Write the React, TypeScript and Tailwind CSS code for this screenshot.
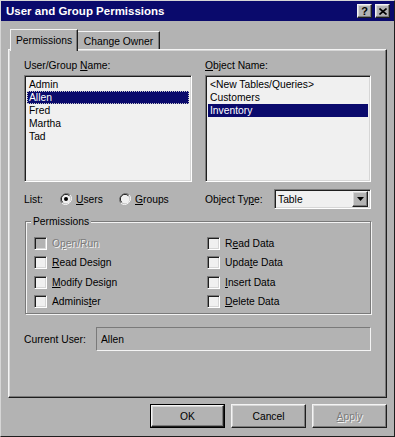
import type { ReactNode } from "react";

const U = ({ children }: { children: ReactNode }) => (
  <span className="underline underline-offset-[1px]">{children}</span>
);

const sunken =
  "border border-t-[#7a7a7a] border-l-[#7a7a7a] border-r-white border-b-white shadow-[inset_1px_1px_0_#1e1e1e,inset_-1px_-1px_0_#d6d6d6]";

const raised =
  "border border-t-[#f4f4f4] border-l-[#f4f4f4] border-r-[#1e1e1e] border-b-[#1e1e1e] shadow-[inset_-1px_-1px_0_#7a7a7a,inset_1px_1px_0_#d6d6d6]";

const disabledText = "text-[#7c7c7c] [text-shadow:1px_1px_0_#f4f4f4]";

const Checkbox = ({ label, disabled }: { label: ReactNode; disabled?: boolean }) => (
  <div className="flex items-center h-[13px]">
    <div className={`w-[13px] h-[13px] ${sunken} ${disabled ? "bg-[#b3b3b3]" : "bg-[#f0f0f0]"}`} />
    <span className={`ml-[5px] ${disabled ? disabledText : ""}`}>{label}</span>
  </div>
);

const Radio = ({ checked }: { checked?: boolean }) => (
  <svg width="12" height="12" viewBox="0 0 12 12">
    <path d="M10.2 1.8A6 6 0 0 0 1.8 10.2" fill="none" stroke="#7a7a7a" strokeWidth="1" />
    <path d="M1.8 10.2A6 6 0 0 0 10.2 1.8" fill="none" stroke="#f4f4f4" strokeWidth="1" />
    <circle cx="6" cy="6" r="4.6" fill="#f0f0f0" />
    <path d="M9.3 2.7A4.6 4.6 0 0 0 2.7 9.3" fill="none" stroke="#1e1e1e" strokeWidth="1" />
    {checked && <circle cx="6" cy="6" r="2" fill="#000" />}
  </svg>
);

const users = ["Admin", "Allen", "Fred", "Martha", "Tad"];
const objects = ["<New Tables/Queries>", "Customers", "Inventory"];

export default function App() {
  return (
    <div className="w-[395px] h-[437px] bg-[#b3b3b3] text-black text-[10.3px] leading-[13px] font-['Liberation_Sans',Arial,sans-serif] border border-t-[#d6d6d6] border-l-[#d6d6d6] border-r-[#1e1e1e] border-b-[#1e1e1e] flex flex-col">
      {/* title bar */}
      <div className="h-[20px] bg-[#0a0a6c] flex items-center justify-between pl-[5px] pr-[4px]">
        <span className="text-white font-bold text-[11.5px]">User and Group Permissions</span>
        <div className="flex gap-[3px]">
          <div className={`w-[15px] h-[14px] bg-[#b3b3b3] ${raised} flex items-center justify-center font-bold text-[11px] leading-none`}>
            ?
          </div>
          <div className={`w-[15px] h-[14px] bg-[#b3b3b3] ${raised} flex items-center justify-center`}>
            <svg width="8" height="7" viewBox="0 0 8 7">
              <path d="M0.5 0.5L7.5 6.5M7.5 0.5L0.5 6.5" stroke="#000" strokeWidth="1.6" />
            </svg>
          </div>
        </div>
      </div>

      <div className="px-[7px] flex flex-col">
        {/* tabs */}
        <div className="flex items-end h-[28px] pl-[2px]">
          <div className="relative z-10 w-[68px] h-[22px] mb-[-2px] bg-[#b3b3b3] border-t border-l border-r border-t-[#f4f4f4] border-l-[#f4f4f4] border-r-[#1e1e1e] shadow-[inset_-1px_0_0_#7a7a7a] flex items-start justify-center pt-[4px]">
            Permissions
          </div>
          <div className="w-[82px] h-[18px] bg-[#b3b3b3] border-t border-r border-t-[#f4f4f4] border-r-[#1e1e1e] shadow-[inset_-1px_0_0_#7a7a7a] flex items-start justify-center pt-[3px]">
            Change Owner
          </div>
        </div>

        {/* panel */}
        <div className={`h-[349px] ${raised} px-[15px] pt-[9px] flex flex-col`}>
          <div className="flex gap-[13px]">
            <div className="w-[168px] flex flex-col">
              <div>
                User/Group <U>N</U>ame:
              </div>
              <div className={`mt-[3px] h-[107px] bg-[#f0f0f0] ${sunken} p-[2px]`}>
                {users.map((u) => (
                  <div
                    key={u}
                    className={`h-[13px] pl-[2px] ${
                      u === "Allen"
                        ? "bg-[#0a0a6c] text-white outline-1 outline-dotted outline-[#c8c8c8] -outline-offset-1"
                        : ""
                    }`}
                  >
                    {u}
                  </div>
                ))}
              </div>
            </div>
            <div className="w-[166px] flex flex-col">
              <div>
                <U>O</U>bject Name:
              </div>
              <div className={`mt-[3px] h-[107px] bg-[#f0f0f0] ${sunken} p-[2px]`}>
                {objects.map((o) => (
                  <div
                    key={o}
                    className={`h-[13px] pl-[2px] ${o === "Inventory" ? "bg-[#0a0a6c] text-white" : ""}`}
                  >
                    {o}
                  </div>
                ))}
              </div>
            </div>
          </div>

          {/* list / object type row */}
          <div className="mt-[7px] h-[20px] flex items-center gap-[13px]">
            <div className="w-[168px] flex items-center">
              <span className="w-[36px]">List:</span>
              <Radio checked />
              <span className="ml-[4px] w-[43px]">
                <U>U</U>sers
              </span>
              <Radio />
              <span className="ml-[4px]">
                <U>G</U>roups
              </span>
            </div>
            <div className="w-[166px] flex items-center justify-between">
              <span>
                Object Ty<U>p</U>e:
              </span>
              <div className={`w-[97px] h-[20px] bg-[#f0f0f0] ${sunken} flex items-center justify-between pl-[3px] pr-[2px]`}>
                <span>Table</span>
                <div className={`w-[16px] h-[16px] bg-[#b3b3b3] ${raised} flex items-center justify-center`}>
                  <svg width="7" height="4" viewBox="0 0 7 4">
                    <path d="M0 0H7L3.5 4Z" fill="#000" />
                  </svg>
                </div>
              </div>
            </div>
          </div>

          {/* permissions group */}
          <div className="relative mt-[12px] ml-[1px] h-[93px] border border-[#7a7a7a] shadow-[1px_1px_0_#f4f4f4,inset_1px_1px_0_#f4f4f4] pl-[8px] pt-[15px]">
            <span className="absolute -top-[7px] left-[5px] px-[2px] bg-[#b3b3b3]">Permissions</span>
            <div className="grid grid-cols-[173px_1fr] gap-y-[6.4px]">
              <Checkbox disabled label={<>O<U>p</U>en/Run</>} />
              <Checkbox label={<>R<U>e</U>ad Data</>} />
              <Checkbox label={<><U>R</U>ead Design</>} />
              <Checkbox label={<>Upda<U>t</U>e Data</>} />
              <Checkbox label={<><U>M</U>odify Design</>} />
              <Checkbox label={<><U>I</U>nsert Data</>} />
              <Checkbox label={<>Adminis<U>t</U>er</>} />
              <Checkbox label={<><U>D</U>elete Data</>} />
            </div>
          </div>

          {/* current user */}
          <div className="mt-[13px] flex items-center">
            <span className="w-[72px]">Current User:</span>
            <div className="flex-1 h-[24px] border border-t-[#7a7a7a] border-l-[#7a7a7a] border-r-[#f4f4f4] border-b-[#f4f4f4] flex items-center pl-[4px]">
              Allen
            </div>
          </div>
        </div>

        {/* buttons */}
        <div className="mt-[6px] flex justify-end gap-[6px]">
          <div className="w-[75px] h-[24px] border border-black">
            <div className={`w-full h-full bg-[#b3b3b3] ${raised} flex items-center justify-center`}>OK</div>
          </div>
          <div className={`w-[75px] h-[24px] bg-[#b3b3b3] ${raised} flex items-center justify-center`}>Cancel</div>
          <div className={`w-[75px] h-[24px] bg-[#b3b3b3] ${raised} flex items-center justify-center ${disabledText}`}>
            <U>A</U>pply
          </div>
        </div>
      </div>
    </div>
  );
}
